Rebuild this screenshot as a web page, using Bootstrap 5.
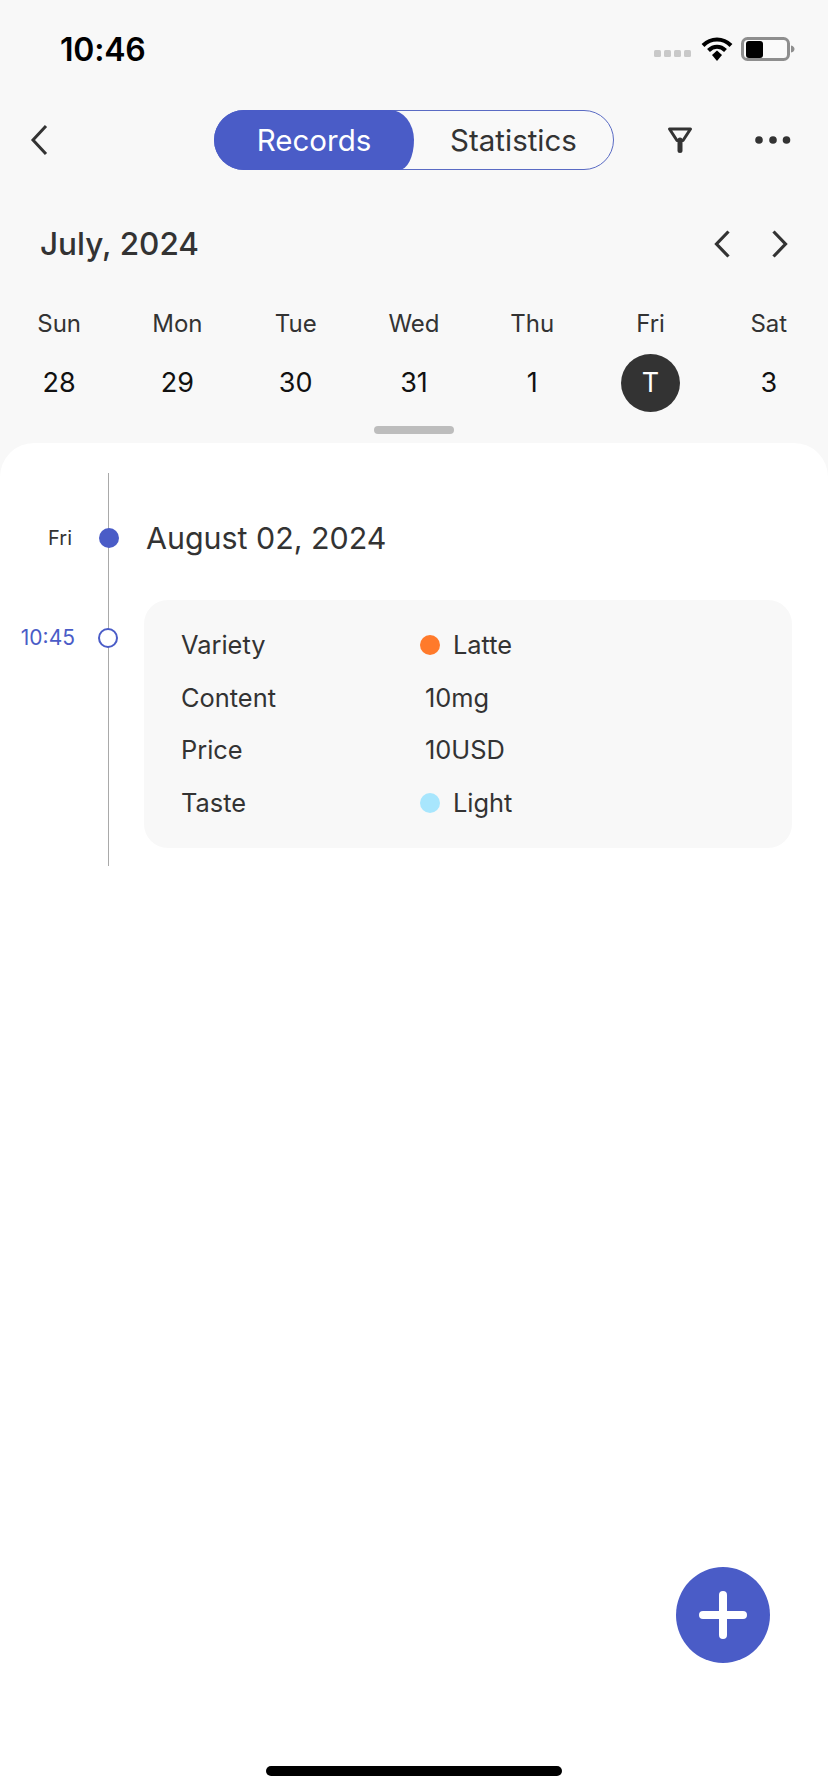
<!DOCTYPE html>
<html lang="en">
<head>
<meta charset="utf-8">
<title>Records</title>
<link href="https://cdn.jsdelivr.net/npm/bootstrap@5.3.0/dist/css/bootstrap.min.css" rel="stylesheet">
<style>
html,body{margin:0;background:#fff}
body{font-family:Inter,"Liberation Sans",sans-serif;color:#333}
.screen{width:828px;height:1792px;background:#f8f8f8;overflow:hidden;position:relative}
.status-row{height:110px;padding:37px 33px 0 60px}
.clock{font-size:32px;font-weight:600;color:#000;line-height:24px;margin-top:1px;letter-spacing:-.2px}
.status-icons{height:24px}
.sig{gap:3px;margin:13px 10px 0 0}
.sig i{display:block;width:7px;height:7px;border-radius:1.5px;background:#c9c9c9}
.top-row{height:60px;position:relative}
.back-wrap{width:214px;padding-left:30px}
.seg{width:400px;height:60px;border:1px solid #5a6bc4;border-radius:30px;background:#f9f9f9}
.seg-on{width:200px;margin:-1px 0 -1px -1px;background:#4a5cc7;color:#fff;border-radius:30px 24px 15px 30px / 30px 30px 30px 30px;font-size:29.5px;line-height:60px;text-align:center;height:60px}
.seg-off{flex:1;font-size:29.5px;line-height:58px;text-align:center;color:#333}
.top-tools{padding-left:53px;gap:62px}
.month-row{margin-top:54.5px;padding:0 40px;height:38px}
.month{font-size:31.5px;font-weight:500;line-height:38px;color:#333;margin:0}
.month-nav{gap:42px}
.week{margin-top:46.5px}
.wk-col{width:calc(828px / 7);text-align:center}
.wk-name{font-size:24px;line-height:30px;color:#333}
.wk-num{font-size:27px;line-height:58px;height:58px;color:#111;margin-top:15px}
.wk-today{width:59px;height:58px;border-radius:50%;background:#333;color:#fff;margin:15px auto 0;font-size:27px;line-height:58px}
.grab{width:80px;height:8px;border-radius:4px;background:#bdbdbd;margin:14px auto 9px}
.sheet{background:#fff;border-radius:34px 34px 0 0;height:1349px;position:relative;padding-top:84px}
.rail{position:absolute;left:108px;top:30px;width:1px;height:393px;background:#a9a9a9}
.day-row{height:22px;align-items:center;position:relative}
.day-lbl{width:72px;text-align:right;font-size:20px;color:#333;line-height:22px}
.day-dot{width:20px;height:20px;border-radius:50%;background:#4a5cc7;margin-left:27px;position:relative}
.day-title{font-size:30.4px;color:#333;margin-left:27px;line-height:22px}
.entry{margin-top:51px;position:relative}
.time-lbl{width:75px;text-align:right;font-size:21px;line-height:24px;color:#4a5cc7;margin-top:26px}
.ring{width:20px;height:20px;border-radius:50%;border:2.5px solid #4a5cc7;background:#fff;margin:28px 0 0 23px;position:relative}
.detail{width:648px;height:248px;margin-left:26px;background:#f8f8f8;border-radius:24px;padding:19px 0 0 37px}
.drow{height:52.6px;line-height:52.6px;font-size:25.4px;color:#333}
.dkey{width:239px}
.dot{width:20px;height:20px;border-radius:50%;margin-right:13px}
.dot-orange{background:#ff7a2b}
.dot-sky{background:#a8e6fd}
.plain-val{padding-left:5px}
.fab{position:absolute;left:676px;top:1567px;width:94px;height:96px;border-radius:50%;background:#4a5cc7;border:0;padding:0}
.home-bar{position:absolute;left:266px;top:1766px;width:296px;height:10px;border-radius:5px;background:#000}
</style>
</head>
<body>
<div class="screen d-flex flex-column">
  <div class="status-row d-flex justify-content-between flex-shrink-0">
    <div class="clock">10:46</div>
    <div class="status-icons d-flex align-items-start">
      <div class="sig d-flex"><i></i><i></i><i></i><i></i></div>
      <svg width="32" height="24" viewBox="0 0 32 24" class="d-block">
        <path d="M2 8.500C10 .5 22 .5 30 8.500" fill="none" stroke="#000" stroke-width="4"/>
        <path d="M7.500 13.500C12.500 8.500 19.500 8.500 24.500 13.500" fill="none" stroke="#000" stroke-width="4"/>
        <path d="M11 18l5-4.500 5 4.500-5 6z" fill="#000"/>
      </svg>
      <svg width="54" height="24" viewBox="0 0 54 24" class="d-block ms-2">
        <rect x="1.500" y="1.500" width="46" height="21" rx="5" fill="#fafafa" stroke="#8e8e8e" stroke-width="3"/>
        <rect x="5" y="4" width="17" height="17" rx="3" fill="#000"/>
        <path d="M50 8.500c2.500.5 3.500 2 3.500 3.500s-1 3-3.500 3.500z" fill="#8e8e8e"/>
      </svg>
    </div>
  </div>

  <div class="top-row d-flex align-items-center flex-shrink-0">
    <div class="back-wrap">
      <svg width="18" height="32" viewBox="0 0 18 32" class="d-block"><path d="M16 2 3 16l13 14" fill="none" stroke="#333" stroke-width="3"/></svg>
    </div>
    <div class="seg d-flex">
      <div class="seg-on">Records</div>
      <div class="seg-off">Statistics</div>
    </div>
    <div class="top-tools d-flex align-items-center">
      <svg width="26" height="26" viewBox="0 0 26 26" class="d-block"><path d="M2.500 2h21L16 13.500H10z" fill="none" stroke="#333" stroke-width="3" stroke-linejoin="round"/><path d="M13 13v10.500" stroke="#333" stroke-width="5" stroke-linecap="round"/></svg>
      <svg width="36" height="8" viewBox="0 0 36 8" class="d-block"><circle cx="4" cy="4" r="3.800" fill="#333"/><circle cx="18" cy="4" r="3.800" fill="#333"/><circle cx="31.500" cy="4" r="3.800" fill="#333"/></svg>
    </div>
  </div>

  <div class="month-row d-flex justify-content-between align-items-center flex-shrink-0">
    <h1 class="month">July, 2024</h1>
    <div class="month-nav d-flex">
      <svg width="16" height="28" viewBox="0 0 16 28" class="d-block"><path d="M14.500 1.500 2.500 14l12 12.500" fill="none" stroke="#333" stroke-width="3.200"/></svg>
      <svg width="16" height="28" viewBox="0 0 16 28" class="d-block"><path d="M1.500 1.500 13.500 14l-12 12.500" fill="none" stroke="#333" stroke-width="3.200"/></svg>
    </div>
  </div>

  <div class="week d-flex flex-shrink-0">
    <div class="wk-col"><div class="wk-name">Sun</div><div class="wk-num">28</div></div>
    <div class="wk-col"><div class="wk-name">Mon</div><div class="wk-num">29</div></div>
    <div class="wk-col"><div class="wk-name">Tue</div><div class="wk-num">30</div></div>
    <div class="wk-col"><div class="wk-name">Wed</div><div class="wk-num">31</div></div>
    <div class="wk-col"><div class="wk-name">Thu</div><div class="wk-num">1</div></div>
    <div class="wk-col"><div class="wk-name">Fri</div><div class="wk-today">T</div></div>
    <div class="wk-col"><div class="wk-name">Sat</div><div class="wk-num">3</div></div>
  </div>
  <div class="grab flex-shrink-0"></div>

  <div class="sheet flex-grow-1">
    <div class="rail"></div>
    <div class="day-row d-flex">
      <div class="day-lbl">Fri</div>
      <div class="day-dot"></div>
      <div class="day-title">August 02, 2024</div>
    </div>
    <div class="entry d-flex align-items-start">
      <div class="time-lbl">10:45</div>
      <div class="ring"></div>
      <div class="detail">
        <div class="drow d-flex"><div class="dkey">Variety</div><div class="d-flex align-items-center"><span class="dot dot-orange"></span>Latte</div></div>
        <div class="drow d-flex"><div class="dkey">Content</div><div class="plain-val">10mg</div></div>
        <div class="drow d-flex"><div class="dkey">Price</div><div class="plain-val">10USD</div></div>
        <div class="drow d-flex"><div class="dkey">Taste</div><div class="d-flex align-items-center"><span class="dot dot-sky"></span>Light</div></div>
      </div>
    </div>
  </div>

  <button class="fab d-flex align-items-center justify-content-center" type="button" aria-label="Add">
    <svg width="48" height="48" viewBox="0 0 48 48" class="d-block"><path d="M24 4v40M4 24h40" stroke="#fff" stroke-width="8" stroke-linecap="round"/></svg>
  </button>
  <div class="home-bar"></div>
</div>
<script src="https://cdn.jsdelivr.net/npm/bootstrap@5.3.0/dist/js/bootstrap.bundle.min.js"></script>
</body>
</html>
